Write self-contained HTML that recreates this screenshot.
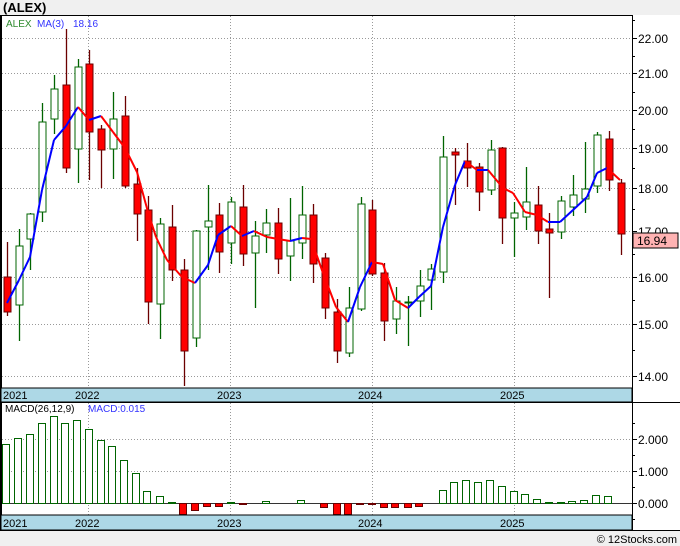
<!DOCTYPE html>
<html><head><meta charset="utf-8"><style>
html,body{margin:0;padding:0;background:#fff;}
body{width:680px;height:546px;overflow:hidden;position:relative;font-family:"Liberation Sans",sans-serif;}
svg{position:absolute;left:0;top:0;}
</style></head><body>
<svg id="s" width="680" height="546" xmlns="http://www.w3.org/2000/svg" font-family="Liberation Sans, DejaVu Sans, sans-serif">
<rect x="0" y="0" width="680" height="15" fill="#f0f0f0"/>
<rect x="0" y="530" width="680" height="16" fill="#f0f0f0"/>
<text x="3" y="12" font-size="13" font-weight="bold" fill="#000">(ALEX)</text>
<g id="grid" stroke="#999" stroke-dasharray="1,2" stroke-width="1"></g>
<g id="cand"></g>
<g id="ma" fill="none" stroke-width="2" stroke-linejoin="round"></g>
<g id="macd"></g>
<!-- frames -->
<line x1="0" y1="15.5" x2="632" y2="15.5" stroke="#000"/>
<line x1="1" y1="15" x2="1" y2="530" stroke="#000" stroke-width="2"/>
<line x1="632.5" y1="15" x2="632.5" y2="530" stroke="#000"/>
<rect x="1" y="388" width="631" height="14" fill="#add8e6" stroke="#000"/>
<rect x="1" y="515" width="631" height="15" fill="#add8e6" stroke="#000"/>
<line x1="0" y1="402.5" x2="680" y2="402.5" stroke="#000"/>
<line x1="0" y1="530.5" x2="680" y2="530.5" stroke="#000"/>
<g font-size="11" fill="#000">
<text x="3" y="399">2021</text><text x="75" y="399">2022</text><text x="217" y="399">2023</text><text x="358" y="399">2024</text><text x="500" y="399">2025</text>
<text x="3" y="527">2021</text><text x="75" y="527">2022</text><text x="217" y="527">2023</text><text x="358" y="527">2024</text><text x="500" y="527">2025</text>
</g>
<g id="ticks" stroke="#000"></g>
<g font-size="12" fill="#000">
<text x="638" y="43">22.00</text><text x="638" y="78">21.00</text><text x="638" y="115">20.00</text><text x="638" y="153">19.00</text><text x="638" y="193">18.00</text><text x="638" y="236">17.00</text><text x="638" y="282">16.00</text><text x="638" y="329">15.00</text><text x="638" y="381">14.00</text>
<text x="638" y="444">2.000</text><text x="638" y="476">1.000</text><text x="638" y="508">0.000</text>
</g>
<rect x="633" y="233" width="45" height="15" fill="#ffb3b3" stroke="#000"/>
<text x="637" y="245" font-size="12" fill="#000">16.94</text>
<g font-size="10">
<text x="6" y="27" fill="#2e8b2e">ALEX</text><text x="37" y="27" fill="#3333ff">MA(3)</text><text x="73" y="27" fill="#3333ff">18.16</text>
<text x="5" y="412" fill="#000">MACD(26,12,9)</text><text x="88" y="412" fill="#3333ff">MACD:0.015</text>
</g>
<text x="677" y="543" font-size="11" fill="#000" text-anchor="end">© 12Stocks.com</text>
</svg>
<script>
var NS="http://www.w3.org/2000/svg";
function el(p,t,a){var e=document.createElementNS(NS,t);for(var k in a)e.setAttribute(k,a[k]);document.getElementById(p).appendChild(e);return e;}
// grid
[38,73,110,148,188,231,277,324,376].forEach(function(y){el("grid","line",{x1:2,y1:y+.5,x2:632,y2:y+.5});});
[439,471].forEach(function(y){el("grid","line",{x1:2,y1:y+.5,x2:632,y2:y+.5});});
el("grid","line",{x1:2,y1:503.5,x2:632,y2:503.5,"stroke-dasharray":"0"}).setAttribute("stroke","#333");
[88,230,372,514].forEach(function(x){el("grid","line",{x1:x+.5,y1:16,x2:x+.5,y2:388});el("grid","line",{x1:x+.5,y1:403,x2:x+.5,y2:515});});
// ticks
[38,73,110,148,188,231,277,324,376,439,471,503].forEach(function(y){el("ticks","line",{x1:632,y1:y+.5,x2:637,y2:y+.5});});
[20,56,92,129,168,209,254,300,350,423,455,487,519].forEach(function(y){el("ticks","line",{x1:632,y1:y+.5,x2:635,y2:y+.5});});
// candles: x, bodyTop, bodyBot, wickTop, wickBot, red?
var C=[[7,277,312,242,316,1],[19,246,305,229,341,0],[30,214,239,213,270,0],[42,122,212,103,222,0],[54,89,119,75,134,0],[66,85,168,29,173,1],[78,67,149,59,183,0],[89,64,132,50,180,1],[101,129,150,125,188,1],[113,119,149,92,179,0],[125,116,186,96,188,1],[137,184,214,168,241,1],[148,210,302,196,324,1],[160,224,304,218,339,0],[172,227,270,205,281,1],[184,270,351,259,386,1],[196,231,338,230,347,0],[208,221,227,185,270,0],[219,215,252,203,273,1],[231,202,243,197,264,0],[243,207,254,185,266,1],[255,236,253,221,308,0],[266,223,235,209,253,0],[278,223,259,208,274,1],[290,241,256,198,281,0],[302,215,243,186,259,0],[313,215,264,204,283,1],[325,258,308,253,319,1],[337,312,351,299,363,1],[349,308,353,287,357,0],[361,204,309,197,311,0],[372,210,274,200,276,1],[384,273,321,263,341,1],[396,301,319,287,334,0],[408,302,303,296,346,0],[420,286,301,270,317,0],[431,269,280,264,310,0],[443,157,272,136,283,0],[455,152,155,148,205,1],[467,161,168,143,187,1],[479,167,192,163,211,1],[491,150,190,140,195,0],[502,148,218,147,244,1],[514,213,218,202,257,0],[526,202,217,167,230,0],[538,205,231,186,244,1],[549,229,233,213,298,1],[561,201,232,196,239,0],[573,195,207,175,216,0],[585,189,199,142,213,0],[597,135,186,132,193,0],[609,139,180,131,191,1],[621,183,234,179,255,1]];
C.forEach(function(c){var r=c[5];var wc=r?"#6b0000":"#006400";
el("cand","line",{x1:c[0]+.5,y1:c[3],x2:c[0]+.5,y2:c[4],stroke:wc,"stroke-width":1.3});
el("cand","rect",{x:c[0]-3,y:c[1],width:7,height:Math.max(1,c[2]-c[1]),fill:r?"#ff0000":"#fff",stroke:r?"#6b0000":"#006400","stroke-width":1});});
// MA
var M=[[7,303],[19,280],[30,257],[42,190],[54,140],[66,126],[78,107],[89,120],[101,116],[113,132],[125,148],[137,172],[148,212],[156,237],[167,260],[182,277],[195,283],[208,265],[218,235],[231,226],[242,236],[254,231],[267,237],[278,239],[290,241],[302,238],[311,239],[323,273],[336,307],[348,322],[360,287],[372,262],[383,264],[395,300],[408,308],[419,297],[431,286],[443,227],[455,185],[465,161],[477,170],[488,170],[503,188],[513,193],[525,212],[537,215],[548,222],[560,222],[573,210],[587,197],[597,173],[607,168],[620,180]];
for(var i=1;i<M.length;i++){el("ma","line",{x1:M[i-1][0],y1:M[i-1][1],x2:M[i][0],y2:M[i][1],stroke:M[i][1]<=M[i-1][1]?"#0000ff":"#ff0000"});}
// MACD
var H=[[6,444],[18,438],[30,434],[42,423],[54,416],[65,423],[77,420],[89,429],[101,440],[112,446],[124,460],[136,473],[147,491],[160,496],[172,502],[183,515],[195,511],[207,507],[219,507],[231,502],[243,505],[254,503],[266,501],[278,503],[290,503],[301,500],[312,503],[324,508],[337,515],[348,515],[360,505],[372,505],[384,508],[395,508],[408,508],[419,507],[431,503],[443,490],[454,482],[466,480],[478,482],[490,480],[502,486],[514,491],[525,494],[537,499],[549,502],[561,502],[572,501],[584,500],[596,495],[608,496],[620,503]];
H.forEach(function(h){var y=h[1];if(y<503){el("macd","rect",{x:h[0]-3.5,y:y+.5,width:7,height:503-y,fill:"#fff",stroke:"#006400"});}
else if(y>503){el("macd","rect",{x:h[0]-3.5,y:503.5,width:7,height:Math.min(y,515)-503-1,fill:"#ff0000",stroke:"#6b0000"});}});
</script>
</body></html>
